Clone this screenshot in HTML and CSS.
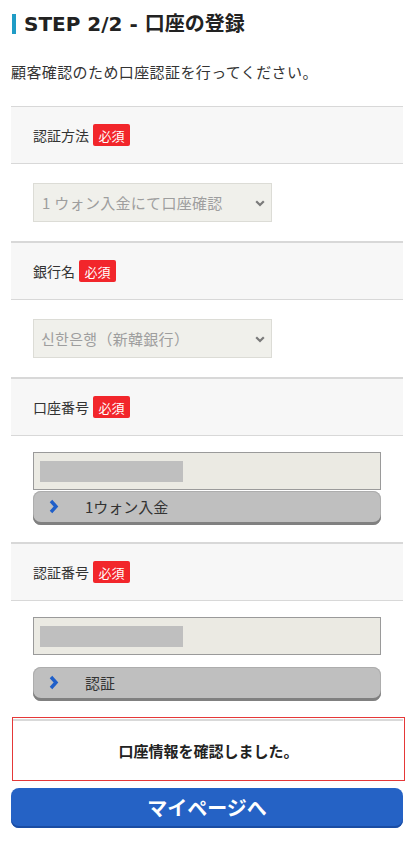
FILE: index.html
```html
<!DOCTYPE html>
<html lang="ja">
<head>
<meta charset="utf-8">
<title>STEP 2/2 - 口座の登録</title>
<link rel="stylesheet" href="styles.css">
</head>
<body>
<main class="page">
  <h2 class="title">STEP 2/2 - 口座の登録</h2>
  <p class="lead">顧客確認のため口座認証を行ってください。</p>

  <section class="field">
    <div class="field-head"><span class="label">認証方法</span><span class="badge">必須</span></div>
    <div class="field-body">
      <div class="select-wrap">
        <div class="select">1 ウォン入金にて口座確認</div>
        <svg class="chev" width="10" height="7" viewBox="0 0 10 7"><polyline points="1.2,1.2 5,5 8.8,1.2" fill="none" stroke="#7a7a7a" stroke-width="2.2"/></svg>
      </div>
    </div>
  </section>

  <section class="field">
    <div class="field-head"><span class="label">銀行名</span><span class="badge">必須</span></div>
    <div class="field-body">
      <div class="select-wrap">
        <div class="select select-kr">신한은행（新韓銀行）</div>
        <svg class="chev" width="10" height="7" viewBox="0 0 10 7"><polyline points="1.2,1.2 5,5 8.8,1.2" fill="none" stroke="#7a7a7a" stroke-width="2.2"/></svg>
      </div>
    </div>
  </section>

  <section class="field">
    <div class="field-head"><span class="label">口座番号</span><span class="badge">必須</span></div>
    <div class="field-body field-body-input">
      <div class="input"><span class="mask"></span></div>
      <button class="btn-gray" type="button">
        <svg class="arrow" width="10" height="15" viewBox="0 0 10 15"><polyline points="2,2 7,7.5 2,13" fill="none" stroke="#1f5fc9" stroke-width="3.4"/></svg>
        <span>1ウォン入金</span>
      </button>
    </div>
  </section>

  <section class="field">
    <div class="field-head"><span class="label">認証番号</span><span class="badge">必須</span></div>
    <div class="field-body field-body-input field-body-last">
      <div class="input"><span class="mask"></span></div>
      <button class="btn-gray btn-gap" type="button">
        <svg class="arrow" width="10" height="15" viewBox="0 0 10 15"><polyline points="2,2 7,7.5 2,13" fill="none" stroke="#1f5fc9" stroke-width="3.4"/></svg>
        <span>認証</span>
      </button>
    </div>
  </section>

  <div class="notice"><p>口座情報を確認しました。</p></div>

  <button class="btn-primary" type="button">マイページへ</button>
</main>
</body>
</html>
```

FILE: styles.css
```css
* { box-sizing: border-box; }
html, body { margin: 0; padding: 0; background: #fff; }
body {
  font-family: "Noto Sans CJK JP", "Noto Sans", sans-serif;
  color: #333;
  width: 414px;
}
.page { padding: 0 11px 30px; }

.title {
  margin: 14px 0 0 1px;
  padding-left: 8px;
  border-left: 4px solid #1f9cc6;
  font-family: "DejaVu Sans", "Noto Sans CJK JP", sans-serif;
  font-size: 20px;
  line-height: 20px;
  font-weight: 700;
  color: #222;
  height: 20px;
  display: flex;
  align-items: center;
}

.lead {
  margin: 28px 0 0;
  font-size: 15px;
  line-height: 20px;
  letter-spacing: 0.4px;
  color: #333;
  height: 44px;
}

.field-head {
  height: 58px;
  background: #f7f7f7;
  border-top: 1px solid #d8d8d8;
  border-bottom: 1px solid #d8d8d8;
  display: flex;
  align-items: center;
  padding: 0 0 0 22px;
  gap: 4px;
}
.field + .field .field-head { border-top: 2px solid #d8d8d8; height: 59px; }
.label { font-size: 14px; color: #333; line-height: 20px; }
.badge {
  display: inline-flex;
  align-items: center;
  justify-content: center;
  width: 37px;
  height: 22px;
  background: #f2262b;
  color: #fff;
  border-radius: 2px;
  font-size: 13px;
  line-height: 1;
}

.field-body { padding: 19px 22px 19px; }

.select-wrap { position: relative; width: 239px; }
.select {
  height: 39px;
  background: #f0f0eb;
  border: 1px solid #dcdcd6;
  font-size: 15px;
  letter-spacing: 0.3px;
  color: #9e9e9e;
  display: flex;
  align-items: center;
  padding-left: 8px;
}
.select-kr { padding-left: 7px; }
.chev { position: absolute; right: 7px; top: 17px; }

.field-body-input { padding: 16px 22px 17px; }
.field-body-last { padding-bottom: 16px; }
.input {
  height: 38px;
  background: #ebeae3;
  border: 1px solid #9a9a9a;
  padding: 8px 6px;
}
.mask {
  display: block;
  width: 143px;
  height: 21px;
  background: #bfbfbf;
}
.btn-gray {
  margin-top: 1px;
  width: 100%;
  height: 34px;
  border: 0;
  border-radius: 8px;
  background: #bfbfbf;
  box-shadow: inset 0 -3px 0 #808080, 0 0 0 1px #adadad inset;
  display: flex;
  align-items: center;
  padding: 0 0 3px 16px;
  font-family: inherit;
  font-size: 15px;
  color: #333;
  gap: 26px;
}
.btn-gap { margin-top: 12px; }

.notice {
  margin: 0 -2px 0 1px;
  height: 64px;
  border: 1px solid #e53838;
  display: flex;
  align-items: center;
  justify-content: center;
  position: relative;
}
.notice::before {
  content: "";
  position: absolute;
  left: 0; right: 1px; top: 1px;
  height: 2px;
  background: #d9d9d9;
}
.notice p {
  margin: 3px 0 0;
  font-size: 15px;
  font-weight: 700;
  color: #222;
}

.btn-primary {
  margin-top: 7px;
  width: 100%;
  height: 40px;
  border: 0;
  border-radius: 8px;
  background: #2562c5;
  box-shadow: inset 0 -2px 0 #1a4ca3;
  color: #fff;
  font-family: inherit;
  font-size: 20px;
  font-weight: 700;
  display: flex;
  align-items: center;
  justify-content: center;
  padding: 0 0 2px;
}
```
